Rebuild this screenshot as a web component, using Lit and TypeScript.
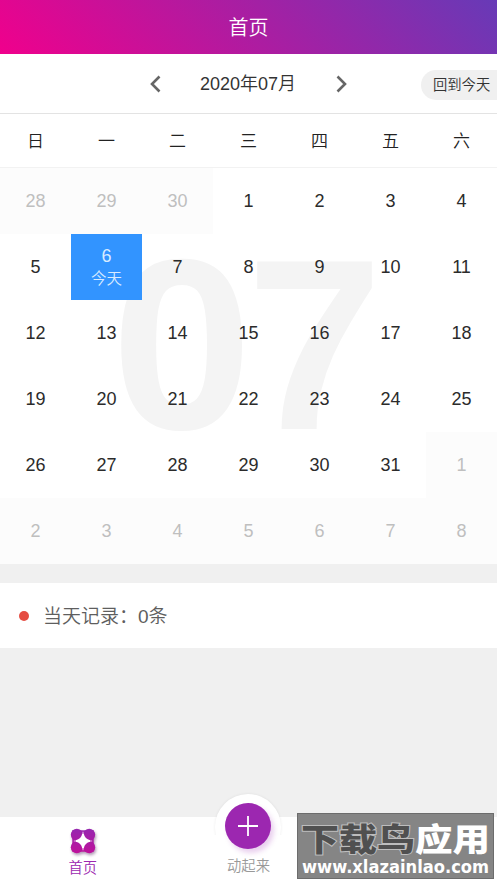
import { LitElement, html, css, svg } from "lit";
import { customElement } from "lit/decorators.js";
import { classMap } from "lit/directives/class-map.js";

interface Day {
  label: number;
  outside: boolean;
  today: boolean;
}

const WEEKDAYS = ["日", "一", "二", "三", "四", "五", "六"];

// July 2020 starts on a Wednesday: three leading days, eight trailing ones.
const DAYS: Day[] = Array.from({ length: 42 }, (_, i) => {
  const n = i - 2;
  if (n < 1) return { label: n + 30, outside: true, today: false };
  if (n > 31) return { label: n - 31, outside: true, today: false };
  return { label: n, outside: false, today: n === 6 };
});

@customElement("month-calendar")
class MonthCalendar extends LitElement {
  static styles = css`
    :host { display: block; background: #fff; }
    .toolbar {
      height: 59px; border-bottom: 1px solid #e3e3e3; display: grid;
      grid-template-columns: 1fr auto 1fr; align-items: center; color: #333;
    }
    .nav { grid-column: 2; display: flex; align-items: center; gap: 38px; margin-right: 1px; }
    .nav svg { display: block; width: 12px; height: 18px; }
    .month { width: 97px; text-align: center; font-size: 18px; line-height: 24px; white-space: nowrap; }
    .back {
      justify-self: end; width: 76px; height: 30px; box-sizing: border-box;
      margin-top: 2px; padding-left: 12px; border-radius: 15px 0 0 15px; background: #f0f0f0;
      font-size: 14.3px; line-height: 31px; white-space: nowrap;
    }
    .week { display: grid; grid-template-columns: repeat(7, 71px); height: 53px; border-bottom: 1px solid #f2f2f2; overflow: hidden; }
    .weekday { text-align: center; font-size: 17px; line-height: 56px; color: #222; }
    .month-grid { position: relative; height: 396px; overflow: hidden; }
    .ghost {
      position: absolute; left: 114px; top: 37px; font-size: 244px; line-height: 280px;
      font-weight: 700; color: #f4f4f4; white-space: nowrap; display: flex;
    }
    .wide { margin-right: -3px; transform: scaleX(1.04); }
    .days { position: relative; display: grid; grid-template-columns: repeat(7, 71px); grid-auto-rows: 66px; }
    .day {
      display: flex; flex-direction: column; align-items: center; justify-content: center;
      font-size: 18px; line-height: 24px; color: #2b2b2b;
    }
    .outside { background: #fcfcfc; color: #bfbfbf; }
    .today { background: #3294ff; color: #d9ebff; }
    .tag { font-size: 15.5px; line-height: 22px; }
  `;

  render() {
    return html`
      <div class="toolbar">
        <div class="nav">
          <svg viewBox="0 0 12 18"><path d="M9.5 1.5 2 9 9.5 16.5" fill="none" stroke="#666" stroke-width="2.6" /></svg>
          <div class="month">2020年07月</div>
          <svg viewBox="0 0 12 18"><path d="M2.5 1.5 10 9 2.5 16.5" fill="none" stroke="#666" stroke-width="2.6" /></svg>
        </div>
        <div class="back">回到今天</div>
      </div>
      <div class="week">${WEEKDAYS.map((d) => html`<div class="weekday">${d}</div>`)}</div>
      <div class="month-grid">
        <div class="ghost"><span class="wide">0</span><span>7</span></div>
        <div class="days">
          ${DAYS.map((d) => html`
            <div class=${classMap({ day: true, outside: d.outside, today: d.today })}>
              <span>${d.label}</span>
              ${d.today ? html`<span class="tag">今天</span>` : ""}
            </div>`)}
        </div>
      </div>
    `;
  }
}

@customElement("tab-bar")
class TabBar extends LitElement {
  static styles = css`
    :host { display: grid; grid-template-columns: repeat(3, 1fr); height: 66px; background: #fff; }
    .tab { display: flex; flex-direction: column; align-items: center; font-size: 14.3px; line-height: 20px; color: #999; }
    .home { color: #9c27b0; padding-top: 7px; }
    .home svg { display: block; width: 34px; height: 34px; overflow: visible; filter: drop-shadow(1.5px 2px 1.5px rgba(60, 0, 70, 0.4)); }
    .action { position: relative; padding-top: 39px; }
    .halo {
      position: absolute; top: -23px; left: 50%; width: 66px; height: 66px; margin-left: -33px;
      border-radius: 50%; background: #fff; box-shadow: 0 0 3px rgba(0, 0, 0, 0.08);
    }
    .mask { position: absolute; top: 18px; left: 0; right: 0; height: 30px; background: #fff; }
    .plus {
      position: absolute; top: -14px; left: 50%; width: 46px; height: 46px; margin-left: -23px;
      border-radius: 50%; background: #9c27b0; box-shadow: 3px 4px 5px rgba(156, 39, 176, 0.22);
    }
    .plus svg { display: block; width: 46px; height: 46px; }
    .label { position: relative; }
  `;

  render() {
    const dots = [[10.8, 10.8], [23.2, 10.8], [10.8, 23.2], [23.2, 23.2]];
    return html`
      <div class="tab home">
        <svg viewBox="0 0 34 34">
          <defs>
            <linearGradient id="petal" x1="0" y1="4" x2="0" y2="30" gradientUnits="userSpaceOnUse">
              <stop offset="0" stop-color="#9528b0" /><stop offset="1" stop-color="#c0109a" />
            </linearGradient>
          </defs>
          <path d="M6.3 6.3H27.7V27.7H6.3Z" fill="url(#petal)" />
          ${dots.map(([x, y]) => svg`<circle cx=${x} cy=${y} r="6" fill="url(#petal)" />`)}
          <path d="M17 7.8V26.2M7.8 17H26.2" stroke="#fff" stroke-width="1.2" opacity="0.6" />
          <path d="M17 10Q18.2 15.8 24 17Q18.2 18.2 17 24Q15.8 18.2 10 17Q15.8 15.8 17 10Z" fill="#fff" stroke="#fff" stroke-width="1.6" />
        </svg>
        <span>首页</span>
      </div>
      <div class="tab action">
        <div class="halo"></div>
        <div class="mask"></div>
        <div class="plus"><svg viewBox="0 0 46 46"><path d="M23 13V33M13 23H33" stroke="#fff" stroke-width="1.8" /></svg></div>
        <span class="label">动起来</span>
      </div>
    `;
  }
}

@customElement("app-root")
class AppRoot extends LitElement {
  static styles = css`
    :host {
      position: relative; display: flex; flex-direction: column; width: 497px; height: 883px;
      overflow: hidden; background: #f0f0f0; font-weight: 350;
      font-family: "Liberation Sans", "Noto Sans CJK SC", sans-serif;
    }
    .header {
      flex: none; height: 54px; background: linear-gradient(45deg, #f0008c, #673ab7);
      color: #fff; text-align: center; font-size: 20px; line-height: 57px;
    }
    .records {
      margin-top: 19px; height: 65px; background: #fff; display: flex; align-items: center;
      gap: 14px; padding-left: 19px; font-size: 19px; color: #5e5e5e;
    }
    .dot { width: 10px; height: 10px; border-radius: 50%; background: #e54d42; }
    .text { margin-top: -2px; }
    tab-bar { margin-top: auto; }
    .stamp { position: absolute; left: 297px; top: 813px; width: 197px; height: 66px; }
    .stamp svg { display: block; }
    .stamp text { font-family: "Noto Sans CJK SC", sans-serif; font-weight: 900; }
    .stamp .url { font-family: "DejaVu Sans", sans-serif; font-weight: 700; }
  `;

  render() {
    return html`
      <div class="header">首页</div>
      <month-calendar></month-calendar>
      <div class="records"><span class="dot"></span><span class="text">当天记录：0条</span></div>
      <tab-bar></tab-bar>
      <div class="stamp">
        <svg width="197" height="66" viewBox="0 0 197 66">
          <rect x="0.5" y="0.5" width="196" height="65" fill="#858585" stroke="#6c6c6c" />
          <text x="4" y="38" font-size="32" textLength="114" lengthAdjust="spacingAndGlyphs"
            fill="#505050" stroke="#bdbdbd" stroke-width="2" paint-order="stroke">下载鸟</text>
          <text x="118" y="38" font-size="32" textLength="75" lengthAdjust="spacingAndGlyphs" fill="#fff">应用</text>
          <text class="url" x="5" y="60" font-size="18" textLength="187" lengthAdjust="spacingAndGlyphs" fill="#fff">www.xlazainlao.com</text>
        </svg>
      </div>
    `;
  }
}
